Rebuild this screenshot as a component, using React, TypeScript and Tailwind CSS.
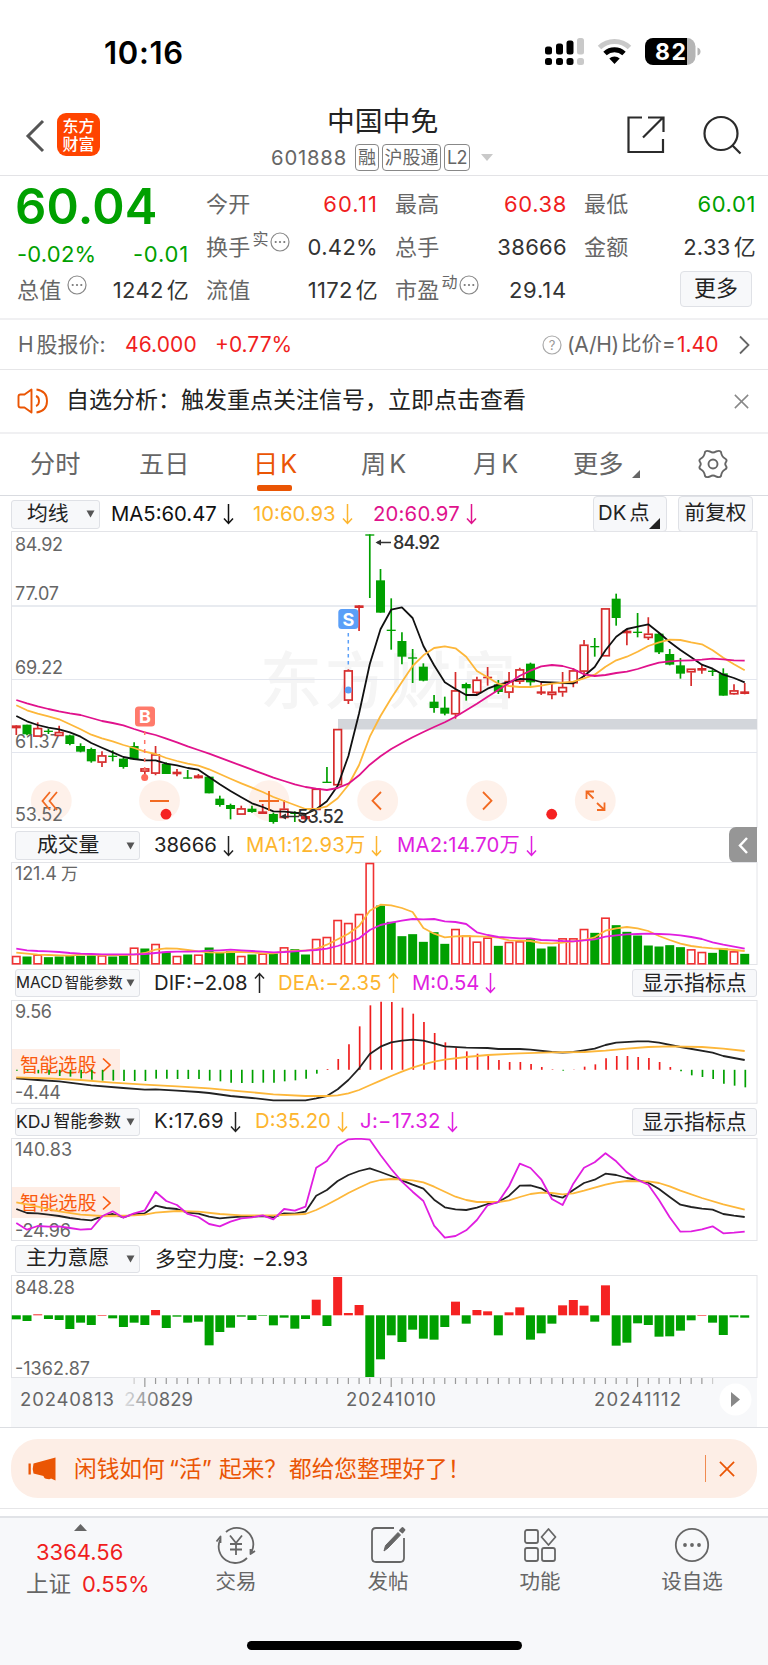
import React from "react";

type Pt = [number, number];

const COUNT = 69;
const cx = (i: number) => 16.3 + 10.712 * i;

// [direction, bodyTop, bodyBottom, high, low], in thirds of a pixel below the panel origin
type Candle = ["r" | "h" | "g", number, number, number, number];
const candles: Candle[] = [
  ["r", 616, 625, 616, 645], ["g", 614, 643, 614, 646], ["h", 624, 650, 607, 650], ["g", 632, 636, 626, 642],
  ["h", 636, 648, 617, 648], ["g", 646, 672, 644, 676], ["g", 678, 695, 670, 697], ["g", 687, 724, 683, 728],
  ["h", 706, 728, 694, 741], ["g", 707, 711, 691, 724], ["g", 716, 741, 714, 746], ["g", 678, 718, 667, 720],
  ["h", 745, 755, 745, 770], ["h", 703, 761, 678, 766], ["g", 732, 762, 727, 762], ["r", 755, 763, 747, 769],
  ["g", 772, 776, 750, 776], ["r", 766, 775, 762, 775], ["g", 770, 820, 770, 820], ["g", 836, 855, 827, 860],
  ["g", 855, 867, 851, 898], ["h", 865, 884, 857, 884], ["g", 866, 876, 857, 878], ["r", 874, 882, 852, 882],
  ["g", 882, 906, 878, 911], ["h", 866, 894, 840, 894], ["g", 876, 882, 874, 906], ["r", 888, 898, 880, 900],
  ["h", 806, 870, 806, 870], ["g", 785, 789, 741, 789], ["h", 627, 796, 627, 796], ["h", 451, 542, 448, 552],
  ["r", 256, 264, 256, 333], ["g", 43, 47, 43, 234], ["g", 181, 278, 147, 278], ["g", 329, 333, 235, 389],
  ["g", 363, 410, 337, 433], ["g", 412, 416, 387, 489], ["g", 440, 482, 430, 484], ["g", 545, 564, 525, 578],
  ["g", 563, 581, 530, 586], ["h", 511, 583, 456, 596], ["g", 492, 505, 488, 542], ["h", 479, 519, 470, 524],
  ["r", 470, 475, 441, 497], ["g", 493, 516, 480, 522], ["h", 483, 518, 456, 535], ["h", 448, 485, 443, 492],
  ["g", 431, 487, 428, 497], ["r", 514, 521, 485, 525], ["h", 515, 525, 492, 538], ["h", 501, 517, 456, 530],
  ["h", 451, 490, 445, 502], ["h", 374, 455, 360, 470], ["g", 378, 382, 354, 410], ["h", 265, 409, 265, 409],
  ["g", 236, 294, 221, 317], ["r", 332, 340, 327, 376], ["g", 335, 339, 279, 352], ["h", 341, 354, 292, 360],
  ["g", 341, 397, 338, 402], ["g", 402, 434, 387, 436], ["g", 436, 461, 414, 476], ["h", 446, 457, 446, 498],
  ["r", 444, 452, 434, 461], ["g", 452, 456, 448, 468], ["g", 460, 527, 445, 527], ["h", 511, 523, 493, 524],
  ["r", 514, 522, 489, 523],
];

const ma5 = [588, 604, 615, 623, 628, 637, 650, 669, 683, 697, 711, 717, 721, 721, 731, 736, 744, 749, 771, 793, 813, 832, 850, 861, 874, 875, 878, 882, 868, 844, 797, 708, 580, 432, 328, 269, 262, 294, 378, 436, 487, 507, 525, 525, 506, 494, 486, 477, 478, 486, 487, 489, 490, 468, 441, 391, 350, 327, 320, 313, 338, 366, 390, 412, 434, 446, 464, 474, 487];
const ma10 = [556, 571, 581, 589, 598, 613, 628, 644, 655, 664, 675, 684, 695, 702, 714, 723, 731, 737, 748, 762, 776, 790, 803, 816, 831, 843, 855, 867, 867, 859, 835, 795, 735, 650, 588, 535, 486, 438, 406, 384, 379, 385, 410, 453, 472, 491, 498, 501, 501, 497, 491, 488, 485, 475, 464, 440, 421, 410, 395, 378, 367, 359, 360, 367, 373, 391, 413, 433, 451];
const ma20 = [540, 550, 559, 567, 574, 580, 585, 594, 603, 609, 616, 627, 637, 645, 656, 667, 679, 690, 701, 713, 725, 737, 749, 761, 773, 783, 793, 801, 806, 810, 804, 791, 766, 734, 709, 687, 669, 652, 636, 621, 607, 590, 571, 551, 530, 510, 489, 467, 452, 439, 435, 438, 447, 463, 468, 465, 459, 455, 447, 437, 428, 424, 422, 421, 419, 416, 418, 421, 422];

const volumeTops = [409, 411, 405, 413, 411, 409, 409, 408, 407, 411, 407, 384, 387, 373, 397, 409, 405, 405, 384, 398, 395, 409, 405, 402, 402, 383, 389, 405, 358, 352, 301, 310, 283, 130, 258, 307, 350, 344, 367, 338, 373, 328, 348, 366, 354, 379, 367, 365, 356, 387, 381, 356, 356, 328, 340, 294, 317, 337, 348, 378, 381, 377, 383, 389, 397, 400, 387, 395, 403];
const volumeUp = new Set([0, 2, 8, 11, 13, 15, 17, 21, 23, 25, 28, 29, 30, 31, 32, 33, 41, 42, 43, 44, 46, 47, 51, 52, 53, 55, 63, 64, 67]);
const vol5 = [398, 401, 404, 405, 406, 407, 404, 404, 405, 405, 405, 404, 399, 389, 385, 386, 390, 394, 397, 398, 396, 396, 397, 400, 400, 395, 392, 392, 387, 374, 358, 341, 318, 272, 254, 256, 264, 276, 324, 341, 352, 349, 348, 349, 350, 353, 361, 362, 363, 369, 370, 368, 364, 360, 352, 332, 325, 321, 325, 333, 348, 360, 371, 378, 382, 385, 387, 390, 393];
const vol10 = [386, 391, 393, 394, 396, 399, 401, 402, 403, 403, 403, 403, 402, 399, 396, 395, 395, 394, 392, 391, 389, 391, 393, 395, 397, 396, 394, 392, 390, 386, 378, 367, 355, 330, 315, 308, 302, 297, 298, 297, 304, 306, 312, 337, 345, 351, 353, 355, 355, 360, 361, 363, 364, 361, 358, 350, 346, 343, 342, 341, 342, 343, 346, 351, 357, 367, 374, 380, 386];

const macdBars = [752, 754, 760, 764, 768, 770, 775, 779, 782, 782, 783, 783, 783, 776, 776, 777, 777, 777, 782, 784, 788, 789, 789, 788, 788, 784, 781, 776, 761, 747, 717, 673, 619, 556, 545, 546, 563, 581, 606, 639, 667, 683, 694, 701, 707, 720, 726, 726, 732, 741, 748, 752, 750, 740, 733, 715, 708, 708, 711, 714, 726, 741, 754, 766, 771, 777, 791, 797, 802];
const dif: Pt[] = [[0, 775], [2, 780], [4, 784], [7, 796], [10, 804], [12, 809], [13, 808], [15, 812], [17, 816], [18, 819], [20, 828], [22, 834], [24, 841], [27, 841], [28, 835], [29, 828], [30, 808], [31, 780], [32, 745], [33, 702], [34, 680], [35, 667], [36, 662], [37, 659], [38, 662], [39, 670], [40, 679], [42, 683], [44, 684], [45, 687], [47, 687], [48, 689], [50, 696], [51, 698], [52, 696], [53, 691], [54, 686], [55, 675], [56, 668], [58, 664], [59, 664], [60, 668], [62, 681], [65, 698], [66, 708], [68, 720]];
const dea: Pt[] = [[0, 772], [3, 775], [6, 780], [9, 788], [12, 794], [15, 799], [18, 805], [21, 814], [24, 823], [27, 828], [29, 828], [30, 826], [31, 820], [32, 810], [33, 796], [34, 782], [35, 768], [36, 755], [37, 743], [38, 733], [39, 725], [40, 719], [42, 711], [44, 705], [47, 700], [50, 697], [53, 696], [55, 692], [57, 686], [59, 681], [61, 679], [64, 681], [66, 686], [68, 693]];

const kLine = [327, 339, 340, 344, 348, 354, 358, 361, 349, 342, 352, 342, 340, 317, 324, 327, 338, 341, 350, 355, 352, 350, 350, 348, 352, 340, 341, 335, 287, 270, 243, 225, 213, 205, 216, 228, 241, 254, 266, 299, 322, 328, 330, 323, 312, 306, 287, 257, 256, 265, 286, 293, 270, 249, 239, 221, 225, 234, 240, 248, 267, 291, 314, 321, 326, 329, 342, 347, 351];
const jLine = [369, 389, 378, 380, 379, 384, 389, 387, 349, 334, 353, 340, 331, 275, 303, 315, 342, 351, 372, 379, 365, 355, 352, 346, 358, 327, 332, 320, 203, 183, 137, 118, 116, 119, 165, 207, 245, 275, 303, 377, 413, 408, 391, 360, 316, 306, 258, 191, 204, 238, 297, 315, 251, 203, 187, 160, 184, 217, 240, 254, 300, 352, 395, 394, 388, 379, 400, 398, 395];
const dLine: Pt[] = [[0, 307], [2, 320], [4, 334], [6, 344], [8, 348], [11, 346], [12, 344], [13, 338], [15, 333], [17, 335], [19, 342], [21, 346], [24, 346], [27, 342], [28, 330], [29, 314], [30, 297], [31, 279], [32, 263], [33, 248], [34, 240], [35, 237], [36, 238], [37, 241], [38, 247], [39, 260], [40, 275], [41, 290], [42, 300], [43, 306], [45, 306], [46, 301], [47, 291], [48, 282], [49, 278], [50, 279], [51, 283], [52, 280], [53, 272], [54, 263], [55, 254], [56, 247], [57, 243], [59, 244], [60, 249], [61, 259], [62, 272], [64, 294], [66, 313], [68, 329]];

const force = [658, 663, 643, 657, 660, 687, 668, 675, 645, 655, 681, 668, 675, 630, 684, 650, 668, 665, 736, 696, 683, 650, 660, 647, 676, 653, 686, 657, 599, 678, 531, 639, 615, 831, 778, 706, 726, 689, 716, 719, 681, 605, 671, 630, 634, 706, 637, 622, 719, 700, 671, 616, 600, 617, 665, 556, 737, 728, 670, 675, 710, 709, 692, 661, 645, 668, 705, 652, 653];

function Line({ data, origin, color, width = 1.8 }: { data: number[] | Pt[]; origin: number; color: string; width?: number }) {
  const pts = (data as (number | Pt)[]).map((d, i) => {
    const [k, y] = Array.isArray(d) ? d : [i, d];
    return `${cx(k).toFixed(1)},${(origin + y / 3).toFixed(1)}`;
  });
  return <polyline points={pts.join(" ")} fill="none" stroke={color} strokeWidth={width} strokeLinejoin="round" />;
}

function AxisText({ x = 15, y, w, children, color = "#666" }: { x?: number; y: number; w: number; children: string; color?: string }) {
  return (
    <text x={x} y={y} textLength={w} fontSize="18" fill={color}>
      {children}
    </text>
  );
}

function Panel({ top, height, y1, y2, children, label }: { top: number; height: number; y1: number; y2: number; children: React.ReactNode; label: string }) {
  return (
    <svg width="768" height={height} viewBox={`0 ${top} 768 ${height}`} className="block shrink-0" aria-label={label}>
      <rect x="11.5" y={y1} width="745.5" height={y2 - y1} fill="#fff" stroke="#e3e4e8" />
      {children}
    </svg>
  );
}

function Arrow({ up = false }: { up?: boolean }) {
  return (
    <svg width="11" height="22" viewBox="0 0 11 22" fill="none" stroke="currentColor" strokeWidth="1.5" className="shrink-0">
      {up ? <path d="M5.5 21V2M1 6.500L5.500 1.500L10 6.500" /> : <path d="M5.500 1V20M1 15.500L5.500 20.500L10 15.500" />}
    </svg>
  );
}

function Dropdown({ children, className }: { children: React.ReactNode; className: string }) {
  return (
    <div className={`flex shrink-0 items-center whitespace-nowrap rounded-[3px] border border-[#dfe1e6] bg-[#f7f8fa] text-[#222] ${className}`}>
      {children}
      <svg width="9" height="8" viewBox="0 0 9 8" className="ml-auto mr-[4px]">
        <path d="M0.500 0.500H8.500L4.500 7.500Z" fill="#555" />
      </svg>
    </div>
  );
}

function Reading({ color, width, children, up }: { color: string; width: string; children: React.ReactNode; up?: boolean }) {
  return (
    <span className={`flex shrink-0 items-center gap-[6px] whitespace-nowrap pt-px ${color} ${width}`}>
      <span>{children}</span>
      <Arrow up={up} />
    </span>
  );
}

function Dots() {
  return (
    <svg width="20" height="20" viewBox="0 0 20 20" className="shrink-0">
      <circle cx="10" cy="10" r="9" fill="none" stroke="#888" strokeWidth="1.2" />
      <circle cx="5.700" cy="10" r="1.100" fill="#777" />
      <circle cx="10" cy="10" r="1.100" fill="#777" />
      <circle cx="14.300" cy="10" r="1.100" fill="#777" />
    </svg>
  );
}

function Quote({ label, value, unit, color = "text-[#333]", sup, dots, dotsGap = "ml-[1px]" }: { label: string; value: string; unit?: string; color?: string; sup?: string; dots?: boolean; dotsGap?: string }) {
  return (
    <div className="flex h-[43px] items-center whitespace-nowrap">
      <span className="text-[22px] text-[#666]">{label}</span>
      {sup && <span className="-mt-[14px] ml-[2px] text-[16px] text-[#666]">{sup}</span>}
      {dots && <span className={`-mt-[10px] ${dotsGap}`}><Dots /></span>}
      <span className={`ml-auto flex pt-px ${color}`}>
        {value}
        {unit && <span className="ml-[3px]">{unit}</span>}
      </span>
    </div>
  );
}

function Cross({ size, color, w = 1.5 }: { size: number; color: string; w?: number }) {
  return (
    <svg width={size} height={size} viewBox="0 0 14 14" fill="none" stroke={color} strokeWidth={w} className="shrink-0">
      <path d="M0.800 0.800L13.200 13.200M13.200 0.800L0.800 13.200" />
    </svg>
  );
}

function SmartPick({ y }: { y: number }) {
  return (
    <g>
      <rect x="12" y={y} width="108" height="31" fill="#feebe3" fillOpacity="0.92" />
      <text x="20" y={y + 22.500} fontSize="19.200" fill="#fa5a0f">智能选股</text>
      <path d={`M103 ${y + 9.500}L110 ${y + 16}L103 ${y + 22.500}`} fill="none" stroke="#fa5a0f" strokeWidth="1.700" />
    </g>
  );
}

function StatusBar() {
  return (
    <div className="flex h-[96px] items-center pl-[104px]">
      <span className="mt-[9px] w-[440px] text-[31px] font-semibold tracking-[0.700px] text-black">10:16</span>
      <svg width="158" height="30" viewBox="544 36 158 30" className="mt-[6px]">
        <g fill="#000">
          <rect x="545" y="46.500" width="7" height="8" rx="2.500" />
          <rect x="556" y="43.500" width="7" height="11" rx="2.500" />
          <rect x="566.500" y="40.500" width="7" height="14" rx="2.500" />
          <rect x="545" y="58" width="7" height="7" rx="2.500" />
          <rect x="556" y="58" width="7" height="7" rx="2.500" />
          <rect x="566.500" y="58" width="7" height="7" rx="2.500" />
        </g>
        <rect x="577" y="38" width="7" height="16.500" rx="2.500" fill="#c9c9c9" />
        <rect x="577" y="58" width="7" height="7" rx="2.500" fill="#c9c9c9" />
        <path d="M599.500 47.500A21.500 21.500 0 0 1 629.500 47.500" fill="none" stroke="#c9c9c9" strokeWidth="5" />
        <path d="M605 53.500A14 14 0 0 1 624 53.500" fill="none" stroke="#000" strokeWidth="5" />
        <path d="M614.500 64L609.300 58.600A7.300 7.300 0 0 1 619.700 58.600Z" fill="#000" />
        <path d="M653 38H687V65H653A8 8 0 0 1 645 57V46A8 8 0 0 1 653 38Z" fill="#000" />
        <path d="M687 38A8.500 8.500 0 0 1 695.500 46.500V56.500A8.500 8.500 0 0 1 687 65Z" fill="#b5b5b5" />
        <path d="M697.500 47.500Q700.500 48.500 700.500 51.500T697.500 55.500Z" fill="#b5b5b5" />
        <text x="655" y="59.500" textLength="31" fontSize="23" fontWeight="700" fill="#fff">82</text>
      </svg>
    </div>
  );
}

function Header() {
  return (
    <div className="flex h-[80px] border-b border-[#e3e3e6]">
      <svg width="20" height="34" viewBox="0 0 20 34" fill="none" stroke="#555" strokeWidth="3" className="ml-[25px] mt-[23px]">
        <path d="M18 2L3 17L18 32" />
      </svg>
      <div className="ml-[12px] mt-[17px] flex h-[43px] w-[43px] flex-col items-center justify-center rounded-[9px] bg-[#ff4400] text-[16px] font-medium leading-[18px] text-white">
        <span>东方</span>
        <span>财富</span>
      </div>
      <div className="ml-[171px] w-[353px]">
        <div className="pl-[56px] text-[27.800px] leading-[50px] text-[#222]">中国中免</div>
        <div className="-mt-[2px] flex items-center text-[#666]">
          <span className="w-[84px] pt-px text-[20.300px] tracking-[0.800px]">601888</span>
          <span className="mr-[3px] flex h-[27px] w-[24px] items-center justify-center rounded-[4px] border border-[#888] text-[18px]">融</span>
          <span className="mr-[3px] flex h-[27px] w-[59px] items-center justify-center rounded-[4px] border border-[#888] text-[18px]">沪股通</span>
          <span className="flex h-[27px] w-[26px] items-center justify-center rounded-[4px] border border-[#888] text-[18px] tracking-[-0.500px]">L2</span>
          <svg width="12" height="7" viewBox="0 0 12 7" className="ml-[11px]"><path d="M0 0H12L6 7Z" fill="#c9c9c9" /></svg>
        </div>
      </div>
      <svg width="118" height="42" viewBox="0 0 118 42" fill="none" stroke="#2b2b2b" strokeWidth="2.200" className="mt-[18px]">
        <path d="M18 3.500H4.500V38H39V25M24 3.500H39.500V18M39 3.500L19 23.500" />
        <circle cx="97" cy="19.500" r="16.500" />
        <path d="M108 31L116.500 39.500" />
      </svg>
    </div>
  );
}

function Quotes() {
  return (
    <div className="flex h-[144px] border-b-2 border-[#f0f0f2] pl-[17px] pt-[6.500px] text-[22px] tracking-[0.300px] text-[#333]">
      <div className="w-[172px]">
        <div className="-ml-[2px] h-[50px] text-[49px] font-semibold leading-[48px] tracking-[0.200px] text-[#00a000]">60.04</div>
        <div className="flex h-[36px] items-center justify-between pt-[7px] text-[22px] tracking-[0.200px] text-[#00a000]">
          <span>-0.02%</span>
          <span className="tracking-[0.800px]">-0.01</span>
        </div>
        <Quote label="总值" dots dotsGap="ml-[5px]" value="1242" unit="亿" />
      </div>
      <div className="ml-[17px] w-[172px]">
        <Quote label="今开" value="60.11" color="text-[#f01e1e] tracking-[1.100px]" />
        <Quote label="换手" sup="实" dots value="0.42%" />
        <Quote label="流值" value="1172" unit="亿" />
      </div>
      <div className="ml-[17px] w-[172px]">
        <Quote label="最高" value="60.38" color="text-[#f01e1e] tracking-[0.600px]" />
        <Quote label="总手" value="38666" />
        <Quote label="市盈" sup="动" dots value="29.14" color="text-[#333] tracking-[0.800px]" />
      </div>
      <div className="ml-[17px] w-[172px]">
        <Quote label="最低" value="60.01" color="text-[#00a000] tracking-[0.600px]" />
        <Quote label="金额" value="2.33" unit="亿" />
        <div className="ml-auto mr-[4px] mt-[2px] flex h-[36px] w-[72px] items-center justify-center rounded-[4px] border border-[#dfe1e6] bg-[#f7f8fa] text-[22px] tracking-normal text-[#222]">更多</div>
      </div>
    </div>
  );
}

function HShare() {
  return (
    <div className="flex h-[50px] items-center whitespace-nowrap border-b border-[#e6e6e8] pl-[18px] text-[21px] text-[#666]">
      <span className="w-[107px]">H<span className="ml-[3px]">股报价:</span></span>
      <span className="w-[90px] tracking-[0.100px] text-[#f01e1e]">46.000</span>
      <span className="text-[#f01e1e]">+0.77%</span>
      <svg width="20" height="20" viewBox="0 0 20 20" className="ml-auto">
        <circle cx="10" cy="10" r="9" fill="none" stroke="#aaa" strokeWidth="1.200" />
        <text x="10" y="14.500" textAnchor="middle" fontSize="13" fill="#999">?</text>
      </svg>
      <span className="ml-[5px] w-[54px] tracking-[-0.300px]">(A/H)</span>
      <span className="w-[56px] text-[20.500px]">比价=</span>
      <span className="w-[62px] text-[#f01e1e]">1.40</span>
      <svg width="11" height="20" viewBox="0 0 11 20" fill="none" stroke="#666" strokeWidth="1.800" className="mr-[18px]"><path d="M1 1.500L9.500 10L1 18.500" /></svg>
    </div>
  );
}

function Notice() {
  return (
    <div className="flex h-[64px] items-center border-b-2 border-[#f0f0f2] pl-[17px] pr-[19px]">
      <svg width="32" height="28" viewBox="0 0 32 28" fill="none" stroke="#ea5504" strokeWidth="1.900" strokeLinejoin="round">
        <path d="M14.500 2.500V25.500L7.500 20.500H3.500Q1.500 20.500 1.500 18.500V9.500Q1.500 7.500 3.500 7.500H7.500Z" />
        <path d="M19 9Q22 10 22 14T19 19M19.500 2.500Q30 4 30 14T19.500 25.500" />
      </svg>
      <span className="ml-[17px] text-[23px] text-[#222]">自选分析：触发重点关注信号，立即点击查看</span>
      <span className="ml-auto"><Cross size={15} color="#888" w={1.400} /></span>
    </div>
  );
}

function Tabs() {
  return (
    <div className="flex h-[62px] items-center whitespace-nowrap border-b border-[#d9dbe0] pl-[30px] text-[25.200px] text-[#666]">
      <span className="w-[109px]">分时</span>
      <span className="w-[114px]">五日</span>
      <span className="relative w-[108px] text-[#ea5504]">
        日<span className="ml-[2px]">K</span>
        <i className="absolute left-[4px] top-[36px] h-[6px] w-[35px] rounded-[2px] bg-[#ea5504]" />
      </span>
      <span className="w-[112px]">周<span className="ml-[3px]">K</span></span>
      <span className="w-[100px]">月<span className="ml-[3px]">K</span></span>
      <span className="flex w-[124px] items-center">更多
        <svg width="8" height="8" viewBox="0 0 8 8" className="ml-[9px] mt-[19px]"><path d="M8 0V8H0Z" fill="#666" /></svg>
      </span>
      <svg width="32" height="30" viewBox="0 0 32 30" fill="none" stroke="#666" strokeWidth="1.900" strokeLinejoin="round" className="-mt-[2px]">
        <path d="M13 2.500Q16 4.500 19 2.500Q23 1 24 3Q24.500 7.500 28 9.500Q30.500 11 29 13Q27.500 15 29 17Q30.500 19 28 20.500Q24.500 22.500 24 27Q23 29 19 27.500Q16 25.500 13 27.500Q9 29 8 27Q7.500 22.500 4 20.500Q1.500 19 3 17Q4.500 15 3 13Q1.500 11 4 9.500Q7.500 7.500 8 3Q9 1 13 2.500Z" />
        <circle cx="16" cy="15" r="4.500" />
      </svg>
    </div>
  );
}

function MaRow() {
  return (
    <div className="flex h-[35px] items-center pl-[11px] text-[20.300px] text-[#111]">
      <Dropdown className="mr-[11px] mt-px h-[29px] w-[89px] pl-[15px] text-[20.800px]">均线</Dropdown>
      <Reading color="text-[#111]" width="w-[142px]">MA5:60.47</Reading>
      <Reading color="text-[#fdb52e]" width="w-[120px]">10:60.93</Reading>
      <Reading color="text-[#e0128c] tracking-[0.200px]" width="w-[120px]">20:60.97</Reading>
      <div className="ml-auto flex h-[36px] w-[74px] items-center whitespace-nowrap rounded-[4px] border border-[#dfe1e6] bg-[#f7f8fa] pl-[4px] text-[20.300px] text-[#222]">
        DK<span className="ml-[3px]">点</span>
        <svg width="11" height="11" viewBox="0 0 11 11" className="-ml-px mt-[20px]"><path d="M11 0V11H0Z" fill="#222" /></svg>
      </div>
      <div className="ml-[11px] mr-[15px] flex h-[36px] w-[75px] items-center justify-center rounded-[4px] border border-[#dfe1e6] bg-[#f7f8fa] text-[20.700px] text-[#222]">前复权</div>
    </div>
  );
}

function PriceChart() {
  const y = (v: number) => 520 + v / 3;
  return (
    <Panel top={531} height={297} y1={531.5} y2={827.5} label="日K">
      <text x="260" y="704" fontSize="62" fontWeight="500" textLength="256" fill="#f5f5f5">东方财富</text>
      <path d="M12 606H757" stroke="#e8ebf0" strokeWidth="2" />
      <path d="M12 679.500H757M12 752.500H757" stroke="#e3e6ee" />
      <rect x="338" y="719" width="419" height="10.500" fill="#d3d6db" />
      <AxisText y={551} w={48}>84.92</AxisText>
      <AxisText y={600} w={44}>77.07</AxisText>
      <AxisText y={674} w={48}>69.22</AxisText>
      <AxisText y={747.500} w={45}>61.37</AxisText>
      {[51.3, 159.5, 269, 377.7, 486.7, 595.3].map((x) => (
        <circle key={x} cx={x} cy="800.700" r="20.400" fill="#fef1ea" />
      ))}
      <AxisText y={821} w={48}>53.52</AxisText>
      {candles.map(([kind, top, bottom, high, low], i) => {
        const x = cx(i);
        const color = kind === "g" ? "#00a000" : "#d62c2c";
        return (
          <g key={i}>
            {kind === "h" ? (
              <>
                <path d={`M${x} ${y(high)}V${y(top)}M${x} ${y(bottom)}V${y(low)}`} stroke={color} strokeWidth="1.700" />
                <rect x={x - 3.800} y={y(top) + 0.600} width="7.600" height={Math.max(y(bottom) - y(top) - 1.2, 1.5)} fill="#fff" stroke={color} strokeWidth="1.700" />
              </>
            ) : (
              <>
                <path d={`M${x} ${y(high)}V${y(low)}`} stroke={color} strokeWidth="1.700" />
                <rect x={x - 4.500} y={y(top)} width="9" height={y(bottom) - y(top)} fill={color} />
              </>
            )}
          </g>
        );
      })}
      <Line data={ma5} origin={520} color="#111" />
      <Line data={ma10} origin={520} color="#fdb73a" />
      <Line data={ma20} origin={520} color="#e0128c" />
      <g stroke="#333" strokeWidth="1.500" fill="#333">
        <path d="M377 542.500H391M299 816.500H283" />
        <path d="M375.500 542.500L381 539.500V545.500ZM280 816.500L286 813.500V819.500Z" stroke="none" />
      </g>
      <g fontSize="18" fontWeight="500" fill="#333">
        <text x="393" y="549" textLength="47">84.92</text>
        <text x="297" y="822.500" textLength="47">53.52</text>
      </g>
      <path d="M144.700 731V777" stroke="#ff7566" strokeWidth="1.500" strokeDasharray="4 5" />
      <circle cx="144.700" cy="777.500" r="3.500" fill="#ff6a5c" />
      <rect x="135" y="706.500" width="20" height="20" rx="3.500" fill="#ff7a6b" />
      <text x="145" y="723" textAnchor="middle" fontSize="18" fontWeight="700" fill="#fff">B</text>
      <path d="M348.300 633V666" stroke="#5a9ff8" strokeWidth="1.500" strokeDasharray="3.500 3.500" />
      <circle cx="348.300" cy="690" r="3.500" fill="#5a9ff8" />
      <rect x="338.300" y="609" width="20" height="20" rx="3.500" fill="#5a9ff8" />
      <text x="348.300" y="625.500" textAnchor="middle" fontSize="18" fontWeight="700" fill="#fff">S</text>
      <g fill="none" stroke="#f26a21" strokeWidth="1.800">
        <path d="M50 792L42.500 801L50 810M57 792L49.500 801L57 810" />
        <path d="M150 801H169M259 801H279M269 791V811" />
        <path d="M381 792L372.500 800.700L381 809.500M483 792L491.500 800.700L483 809.500" />
        <path d="M586.500 799V791.500H594M587 792L593.500 798.500M604.500 802.500V810H597M604 809.500L597 803" />
      </g>
      <circle cx="166" cy="814.200" r="5.400" fill="#f52222" />
      <circle cx="551.700" cy="814.200" r="5.400" fill="#f52222" />
    </Panel>
  );
}

function VolumeChart() {
  const base = 964.6;
  return (
    <Panel top={862} height={103} y1={862.5} y2={964.5} label="成交量">
      <AxisText y={880} w={42}>121.4</AxisText>
      <text x="61" y="880" fontSize="17" fill="#666">万</text>
      {volumeTops.map((t, i) => {
        const top = 820 + t / 3;
        return volumeUp.has(i) ? (
          <rect key={i} x={cx(i) - 3.700} y={top + 0.200} width="7.400" height={base - top - 1} fill="#fff" stroke="#f03232" strokeWidth="1.600" />
        ) : (
          <rect key={i} x={cx(i) - 4.500} y={top - 0.500} width="9" height={base - top + 0.300} fill="#00a000" />
        );
      })}
      <Line data={vol5} origin={820} color="#fdb73a" />
      <Line data={vol10} origin={820} color="#e01ee0" />
    </Panel>
  );
}

function MacdChart() {
  return (
    <Panel top={1000} height={104} y1={1000.5} y2={1103.3} label="MACD">
      <AxisText y={1018} w={37}>9.56</AxisText>
      <AxisText y={1099} w={46}>-4.44</AxisText>
      <SmartPick y={1049} />
      {macdBars.map((v, i) => (
        <path key={i} d={`M${cx(i) + 0.600} 1069.800V${820 + v / 3}`} stroke={v > 750 ? "#00a000" : "#f01e1e"} strokeWidth="1.700" />
      ))}
      <Line data={dif} origin={820} color="#222" />
      <Line data={dea} origin={820} color="#fdb73a" />
    </Panel>
  );
}

function KdjChart() {
  return (
    <Panel top={1138} height={103} y1={1138.5} y2={1240.5} label="KDJ">
      <AxisText y={1156} w={57}>140.83</AxisText>
      <AxisText y={1236.500} w={56}>-24.96</AxisText>
      <SmartPick y={1187} />
      <Line data={kLine} origin={1100} color="#222" />
      <Line data={dLine} origin={1100} color="#fdb73a" />
      <Line data={jLine} origin={1100} color="#e01ee0" />
    </Panel>
  );
}

function ForceChart() {
  return (
    <Panel top={1275} height={103} y1={1275.5} y2={1377.5} label="主力意愿">
      <AxisText y={1293.500} w={60}>848.28</AxisText>
      <AxisText y={1374.500} w={75}>-1362.87</AxisText>
      {force.map((v, i) => {
        const a = 1315.3;
        const b = 1100 + v / 3;
        return <rect key={i} x={cx(i) - 4.500} y={Math.min(a, b)} width="9" height={Math.max(Math.abs(b - a), 0.6)} fill={v > 646 ? "#00a000" : "#f52222"} />;
      })}
    </Panel>
  );
}

function DateAxis() {
  return (
    <svg width="768" height="49" viewBox="0 1378 768 49" className="block" aria-label="日期">
      <defs>
        <linearGradient id="fade" gradientUnits="userSpaceOnUse" x1="122" x2="160" y1="0" y2="0">
          <stop offset="0" stopColor="#666" stopOpacity="0.100" />
          <stop offset="1" stopColor="#666" />
        </linearGradient>
      </defs>
      <rect x="11" y="1378" width="746" height="49" fill="#f7f8fa" />
      {Array.from({ length: COUNT }, (_, i) => i)
        .filter((i) => i >= 11 && i <= 65)
        .map((i) => (
          <path key={i} d={`M${cx(i)} 1378V${[12, 35, 58].includes(i) ? 1387 : 1384}`} stroke={i === 11 || i === 65 ? "#ccc" : "#999"} strokeWidth="1.200" />
        ))}
      <g fontSize="18.500" fill="#666">
        <text x="20" y="1406" textLength="94">20240813</text>
        <text x="124" y="1406" textLength="69" fill="url(#fade)">240829</text>
        <text x="346" y="1406" textLength="90">20241010</text>
        <text x="594" y="1406" textLength="87">20241112</text>
      </g>
      <circle cx="735.500" cy="1399.500" r="16" fill="#fff" />
      <path d="M731 1392L740 1399.500L731 1407Z" fill="#888" />
    </svg>
  );
}

function IndexButton() {
  return (
    <div className="ml-auto mr-[11px] mt-px flex h-[28px] w-[125px] items-center justify-center whitespace-nowrap rounded-[3px] border border-[#dfe1e6] bg-[#f7f8fa] text-[20.900px] text-[#222]">显示指标点</div>
  );
}

function Promo() {
  return (
    <div className="h-[81px] border-b border-[#e6e6e8] px-[11px] pt-[11px]">
      <div className="flex h-[59px] items-center whitespace-nowrap rounded-[27px] bg-[#fdeee6] pl-[17px] text-[22.700px] text-[#ea5504]">
        <svg width="28" height="24" viewBox="0 0 28 24" fill="#ea5504">
          <path d="M0.500 6.500H2.800V17.500H0.500ZM5.500 6.500L27.500 0.500V23.500L23 21.500Q22 22.500 19.500 22Q16 22 15.500 19L5.500 16.500Q4 12 5.500 6.500Z" />
        </svg>
        <span className="ml-[18px] w-[95px]">闲钱如何</span>
        <span className="flex w-[51px]">“<span>活</span>”</span>
        <span className="w-[69px] -translate-x-px">起来？</span>
        <span>都给您整理好了！</span>
        <span className="ml-auto h-[27px] w-[1.500px] bg-[#f08a50]" />
        <span className="ml-[13px] mr-[22px]"><Cross size={16} color="#ea5504" /></span>
      </div>
    </div>
  );
}

function NavItem({ label, children, className }: { label: string; children: React.ReactNode; className: string }) {
  return (
    <div className={`flex flex-col items-center ${className}`}>
      <svg width="42" height="38" viewBox="0 0 42 38" fill="none" stroke="#666" strokeWidth="1.800" strokeLinejoin="round" className="mt-[8px]">{children}</svg>
      <span className="mt-[5px] text-[20.500px] leading-[26px] text-[#666]">{label}</span>
    </div>
  );
}

function BottomNav() {
  return (
    <div className="flex h-[149px] flex-col border-t-2 border-[#e1e3e7] bg-[#f7f8fa]">
      <div className="flex h-[123px] pl-[20px]">
        <div className="flex w-[140px] flex-col whitespace-nowrap text-[22px]">
          <svg width="13" height="7" viewBox="0 0 13 7" className="ml-[54px] mt-[6px]"><path d="M6.500 0L13 7H0Z" fill="#666" /></svg>
          <span className="ml-[16px] mt-[6px] leading-[30px] text-[#f01e1e]">3364.56</span>
          <span className="mt-[2px] flex w-full leading-[30px] text-[#f01e1e]"><span className="ml-[6px] w-[56px] text-[22.500px] text-[#666]">上证</span>0.55%</span>
        </div>
        <NavItem label="交易" className="w-[152px]">
          <path d="M11 6A16.500 16.500 0 0 1 36.500 26M5 14A16.500 16.500 0 0 0 32 32M1.500 15.500L5.500 10.500V17M35.500 23V28L40 25" />
          <path d="M15 9.500L21 17L27 9.500M21 17V29M15 18H27M15 23.500H27" />
        </NavItem>
        <NavItem label="发帖" className="w-[152px]">
          <path d="M27 2H9Q5 2 5 6V32Q5 36 9 36H33Q37 36 37 32V12" />
          <path d="M17 25L18.500 19.500L31 6.500L33.500 9L21 22Z" fill="#666" strokeWidth="1" />
          <path d="M33 4.500L35.500 2L37.500 4L35.500 6.500Z" fill="#666" />
        </NavItem>
        <NavItem label="功能" className="w-[152px]">
          <rect x="6" y="4" width="13" height="13" rx="2" />
          <rect x="6" y="22" width="13" height="13" rx="2" />
          <rect x="23" y="22" width="13" height="13" rx="2" />
          <path d="M29.500 3L36.500 11L29.500 19L22.500 11Z" />
        </NavItem>
        <NavItem label="设自选" className="w-[152px]">
          <circle cx="21" cy="19" r="16.200" />
          <g fill="#666" stroke="none"><circle cx="14" cy="19" r="1.900" /><circle cx="21" cy="19" r="1.900" /><circle cx="28" cy="19" r="1.900" /></g>
        </NavItem>
      </div>
      <div className="mx-auto h-[9px] w-[275px] rounded-full bg-black" />
    </div>
  );
}

export default function App() {
  return (
    <div className="flex h-[1665px] w-[768px] flex-col overflow-hidden bg-white font-['Inter','Noto_Sans_CJK_SC',sans-serif] leading-[1.2]">
      <StatusBar />
      <Header />
      <Quotes />
      <HShare />
      <Notice />
      <Tabs />
      <MaRow />
      <PriceChart />
      <div className="flex h-[34px] items-center pl-[15px] text-[20.300px]">
        <Dropdown className="mr-[14px] mt-px h-[29px] w-[125px] pl-[21px] text-[20.800px]">成交量</Dropdown>
        <Reading color="text-[#222]" width="w-[92px]">38666</Reading>
        <Reading color="text-[#fdb52e] tracking-[0.200px]" width="w-[151px]">MA1:12.93万</Reading>
        <Reading color="text-[#e01ee0] tracking-[0.200px]" width="w-[150px]">MA2:14.70万</Reading>
        <div className="-my-px ml-auto mr-[11px] flex h-[36px] w-[28px] items-center justify-center rounded-l-[7px] bg-[#969696]">
          <svg width="10" height="17" viewBox="0 0 10 17" fill="none" stroke="#fff" strokeWidth="2.500"><path d="M9 1L2 8.500L9 16" /></svg>
        </div>
      </div>
      <VolumeChart />
      <div className="flex h-[35px] items-center pl-[15px] text-[20.300px]">
        <Dropdown className="mr-[14px] mt-px h-[28px] w-[125px] text-[14.500px]"><span className="text-[15.500px]">MACD</span><span className="ml-[2px]">智能参数</span></Dropdown>
        <Reading color="text-[#222]" width="w-[124px]" up>DIF:−2.08</Reading>
        <Reading color="text-[#fdb52e] tracking-[0.200px]" width="w-[134px]" up>DEA:−2.35</Reading>
        <Reading color="text-[#e01ee0]" width="w-[100px]">M:0.54</Reading>
        <IndexButton />
      </div>
      <MacdChart />
      <div className="flex h-[34px] items-center pl-[15px] text-[20.300px]">
        <Dropdown className="mr-[14px] mt-px h-[28px] w-[125px] text-[16.900px]"><span className="text-[17.500px]">KDJ</span><span className="ml-[3px]">智能参数</span></Dropdown>
        <Reading color="text-[#222] tracking-[0.400px]" width="w-[101px]">K:17.69</Reading>
        <Reading color="text-[#fdb52e]" width="w-[105px]">D:35.20</Reading>
        <Reading color="text-[#e01ee0] tracking-[0.300px]" width="w-[110px]">J:−17.32</Reading>
        <IndexButton />
      </div>
      <KdjChart />
      <div className="flex h-[34px] items-center pl-[15px] text-[20.300px] text-[#222]">
        <Dropdown className="mr-[15px] mt-px h-[28px] w-[125px] pl-[10px] text-[20.800px]">主力意愿</Dropdown>
        <span className="w-[97px] whitespace-nowrap pt-[2px] text-[20.900px]">多空力度:</span>
        <span className="pt-[2px]">−2.93</span>
      </div>
      <ForceChart />
      <div className="h-[50px] border-b border-[#dcdee2]"><DateAxis /></div>
      <Promo />
      <div className="h-[7px]" />
      <BottomNav />
    </div>
  );
}
